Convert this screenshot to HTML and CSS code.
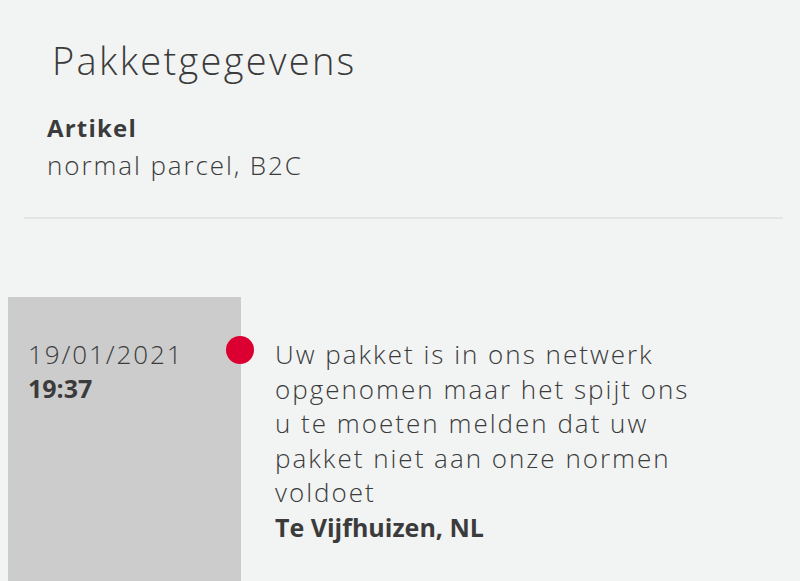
FILE: index.html
```html
<!DOCTYPE html>
<html lang="nl">
<head>
    <meta charset="UTF-8">
    <meta name="viewport" content="width=device-width, initial-scale=1.0">
    <title>Pakketgegevens</title>
    <link rel="stylesheet" href="styles.css">
</head>
<body>
    <section class="details">
        <h2 class="title">Pakketgegevens</h2>
        <div class="field">
            <div class="label">Artikel</div>
            <div class="value">normal parcel, B2C</div>
        </div>
    </section>

    <div class="timeline">
        <div class="when">
            <div class="date">19/01/2021</div>
            <div class="time">19:37</div>
        </div>
        <span class="dot"></span>
        <div class="event">
            <p class="message">Uw pakket is in ons netwerk opgenomen maar het spijt ons u te moeten melden dat uw pakket niet aan onze normen voldoet</p>
            <p class="place">Te Vijfhuizen, NL</p>
        </div>
    </div>
</body>
</html>
```

FILE: styles.css
```css
body { margin: 0; background: #f2f3f3; color: #3b3b3b; font-family: "Open Sans", "Liberation Sans", sans-serif; }
.details { margin: 0 17px 0 24px; padding: 38px 0 33px 23px; border-bottom: 2px solid #e3e5e5; }
.title { margin: 0 0 28px 5px; font-size: 38px; font-weight: 300; line-height: 44px; letter-spacing: 2.3px; }
.label { font-size: 24px; font-weight: 700; line-height: 36px; letter-spacing: 1.2px; }
.value { font-size: 26px; font-weight: 300; line-height: 38px; letter-spacing: 1.9px; }
.timeline { display: flex; align-items: flex-start; margin: 78px 0 0 8px; }
.when { width: 233px; min-height: 300px; padding: 40px 0 0 20px; box-sizing: border-box; background: #cccccc; }
.date { font-size: 26px; font-weight: 300; line-height: 34px; letter-spacing: 1.9px; }
.time { font-size: 25px; font-weight: 700; line-height: 34px; }
.dot { flex: none; width: 28px; height: 28px; margin: 39px 0 0 -15px; border-radius: 50%; background: #dc0032; }
.event { margin: 40px 0 0 21px; width: 425px; }
.message { margin: 0; font-size: 26px; font-weight: 300; line-height: 34.5px; letter-spacing: 2px; }
.place { margin: 0; font-size: 25px; font-weight: 700; line-height: 34.5px; }
```
